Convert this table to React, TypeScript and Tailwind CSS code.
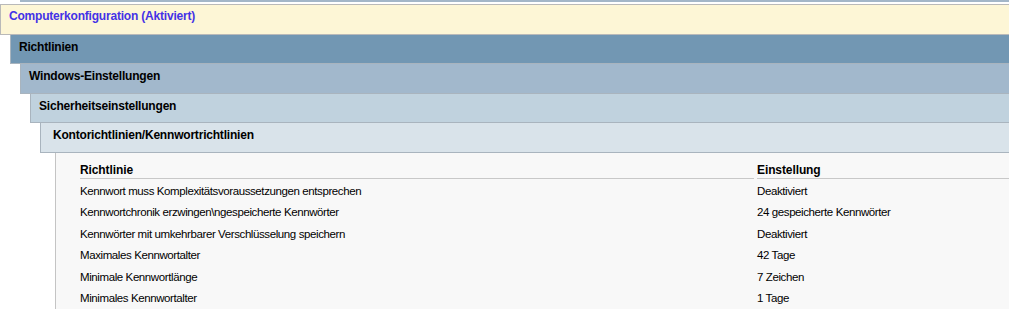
const rows: [string, string][] = [
  ['Kennwort muss Komplexitätsvoraussetzungen entsprechen', 'Deaktiviert'],
  ['Kennwortchronik erzwingen\\ngespeicherte Kennwörter', '24 gespeicherte Kennwörter'],
  ['Kennwörter mit umkehrbarer Verschlüsselung speichern', 'Deaktiviert'],
  ['Maximales Kennwortalter', '42 Tage'],
  ['Minimale Kennwortlänge', '7 Zeichen'],
  ['Minimales Kennwortalter', '1 Tage'],
]

const Band = ({ label, indent, bg, h, pl }: { label: string; indent: string; bg: string; h: string; pl: string }) => (
  <div className={`${indent} ${h}`}>
    <div className={`${bg} ${pl} h-full border-l border-b border-[#a9b4be] pt-[5px] font-bold tracking-[-0.2px] text-black`}>{label}</div>
  </div>
)

export default function App() {
  return (
    <div className="w-[1009px] h-[309px] overflow-hidden bg-white text-[12px] leading-[14px] font-['Liberation_Sans',Arial,sans-serif]">
      {/* tail of the band above */}
      <div className="h-[2px] ml-[20px] bg-[#a3b6c8]" />
      <div className="h-[2px]" />

      <div className="h-[31px] bg-[#fdf6d6] border border-r-0 border-[#b9b9b9] pl-[8px] pt-[4px] font-bold tracking-[-0.2px] text-[#4432e6]">
        Computerkonfiguration (Aktiviert)
      </div>

      <Band label="Richtlinien" indent="ml-[10px]" bg="bg-[#7297b3]" h="h-[29px]" pl="pl-[8px]" />
      <Band label="Windows-Einstellungen" indent="ml-[20px]" bg="bg-[#a2b8cc]" h="h-[30px]" pl="pl-[8px]" />
      <Band label="Sicherheitseinstellungen" indent="ml-[30px]" bg="bg-[#c0d2de]" h="h-[29px]" pl="pl-[8px]" />
      <Band label="Kontorichtlinien/Kennwortrichtlinien" indent="ml-[40px]" bg="bg-[#d9e3ea]" h="h-[30px]" pl="pl-[12px]" />

      <div className="ml-[55px] h-[160px] border-l border-[#c4c4c4] bg-[#f8f8f8] pl-[24px] text-black">
        <div className="grid grid-cols-[674px_1fr] gap-x-[3px]">
          <div className="h-[26px] pt-[10px] border-b border-[#c8c8c8] font-bold tracking-[-0.1px]">Richtlinie</div>
          <div className="h-[26px] pt-[10px] border-b border-[#c8c8c8] font-bold tracking-[-0.1px]">Einstellung</div>
          {rows.map(([name, value]) => (
            <div key={name} className="contents">
              <div className="h-[21.5px] pt-[2px] flex items-center text-[11.5px] tracking-[-0.4px]">{name}</div>
              <div className="h-[21.5px] pt-[2px] flex items-center text-[11.5px] tracking-[-0.4px]">{value}</div>
            </div>
          ))}
        </div>
      </div>
    </div>
  )
}
